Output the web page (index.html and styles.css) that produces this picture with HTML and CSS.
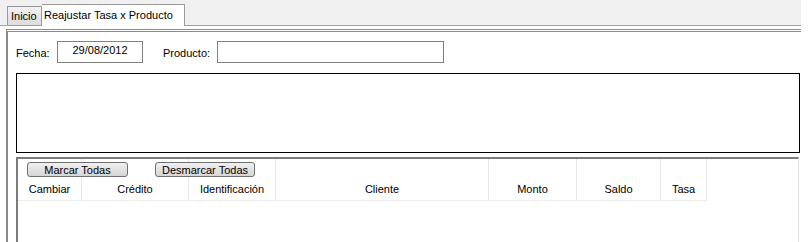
FILE: index.html
```
<!DOCTYPE html>
<html lang="es">
<head>
<meta charset="UTF-8">
<meta name="viewport" content="width=device-width, initial-scale=1.0">
<title>Reajustar Tasa x Producto</title>
<link rel="stylesheet" href="styles.css">
</head>
<body>
<div class="tabs">
  <div class="tab">Inicio</div>
  <div class="tab active">Reajustar Tasa x Producto</div>
</div>
<div class="page">
  <div class="filters">
    <span class="label label-fecha">Fecha:</span>
    <div class="field date">29/08/2012</div>
    <span class="label label-producto">Producto:</span>
    <div class="field product"></div>
  </div>
  <div class="box"></div>
  <div class="grid">
    <div class="grid-head">
      <div class="col col-cambiar">Cambiar</div>
      <div class="col col-credito">Crédito</div>
      <div class="col col-ident">Identificación</div>
      <div class="col col-cliente">Cliente</div>
      <div class="col col-monto">Monto</div>
      <div class="col col-saldo">Saldo</div>
      <div class="col col-tasa">Tasa</div>
    </div>
    <!-- Botones encima de la cabecera -->
    <button class="btn btn-marcar">Marcar Todas</button>
    <button class="btn btn-desmarcar">Desmarcar Todas</button>
  </div>
</div>
</body>
</html>
```

FILE: styles.css
```
/* Ventana estilo formulario de escritorio */
html, body {
  margin: 0;
  padding: 0;
  background: #fff;
  overflow: hidden;
}
body {
  font-family: "Liberation Sans", Arial, sans-serif;
  font-size: 11px;
  line-height: 13px;
  color: #000;
}

/* Pestañas */
.tabs {
  display: flex;
  align-items: flex-end;
  width: 801px;
  height: 25px;
  padding-left: 7px;
  box-sizing: content-box;
  margin-right: 0;
  background: #f0f0f0;
  border-bottom: 1px solid #a0a0a0;
  box-sizing: border-box;
  height: 26px;
}
.tab {
  box-sizing: border-box;
  height: 19px;
  width: 35px;
  padding: 3px 0 0 3px;
  border: 1px solid #9a9a9a;
  border-bottom: none;
  background: linear-gradient(#f2f2f2, #dcdcdc);
  white-space: nowrap;
}
.tab.active {
  width: 143px;
  height: 22px;
  padding: 4px 0 0 2px;
  margin-bottom: -1px;
  border-left: none;
  background: #fff;
}

/* Panel de la pestaña */
.page {
  margin: 3px 0 0 6px;
  width: 795px;
  box-sizing: border-box;
  border-top: 3px double #8c8c8c;
  border-left: 2px solid #8a8a8a;
  padding: 9px 2px 0 8px;
}
.filters {
  display: flex;
  height: 22px;
}
.label {
  padding-top: 6px;
}
.label-fecha {
  width: 41px;
}
.label-producto {
  width: 54px;
}
.field {
  box-sizing: border-box;
  height: 22px;
  border: 1px solid #808080;
  padding-top: 2px;
  text-align: center;
}
.date {
  width: 86px;
  margin-right: 20px;
}
.product {
  width: 227px;
}
.box {
  box-sizing: border-box;
  margin-top: 10px;
  width: 784px;
  height: 80px;
  border: 1px solid #000;
}

/* Grilla de créditos */
.grid {
  position: relative;
  box-sizing: border-box;
  margin-top: 4px;
  width: 783px;
  height: 85px;
  border-top: 2px solid #7c7c7c;
  border-left: 2px solid #7c7c7c;
  border-right: 1px solid #e3e3e3;
}
.grid-head {
  display: flex;
}
.col {
  box-sizing: content-box;
  height: 37px;
  padding-bottom: 4px;
  display: flex;
  align-items: flex-end;
  justify-content: center;
  border-right: 1px solid #e8e8e8;
  border-bottom: 1px solid #ececec;
}
.col-cambiar { width: 63px; }
.col-credito { width: 106px; }
.col-ident { width: 86px; }
.col-cliente { width: 212px; }
.col-monto { width: 87px; }
.col-saldo { width: 83px; }
.col-tasa { width: 45px; }

.btn {
  position: absolute;
  top: 3px;
  box-sizing: border-box;
  height: 15px;
  padding: 0;
  font-family: inherit;
  font-size: 11px;
  line-height: 12px;
  color: #000;
  border: 1px solid #707070;
  border-radius: 3px;
  background: linear-gradient(#f0f0f0, #d6d6d6);
}
.btn-marcar {
  left: 9px;
  width: 101px;
}
.btn-desmarcar {
  left: 137px;
  width: 100px;
}
```
